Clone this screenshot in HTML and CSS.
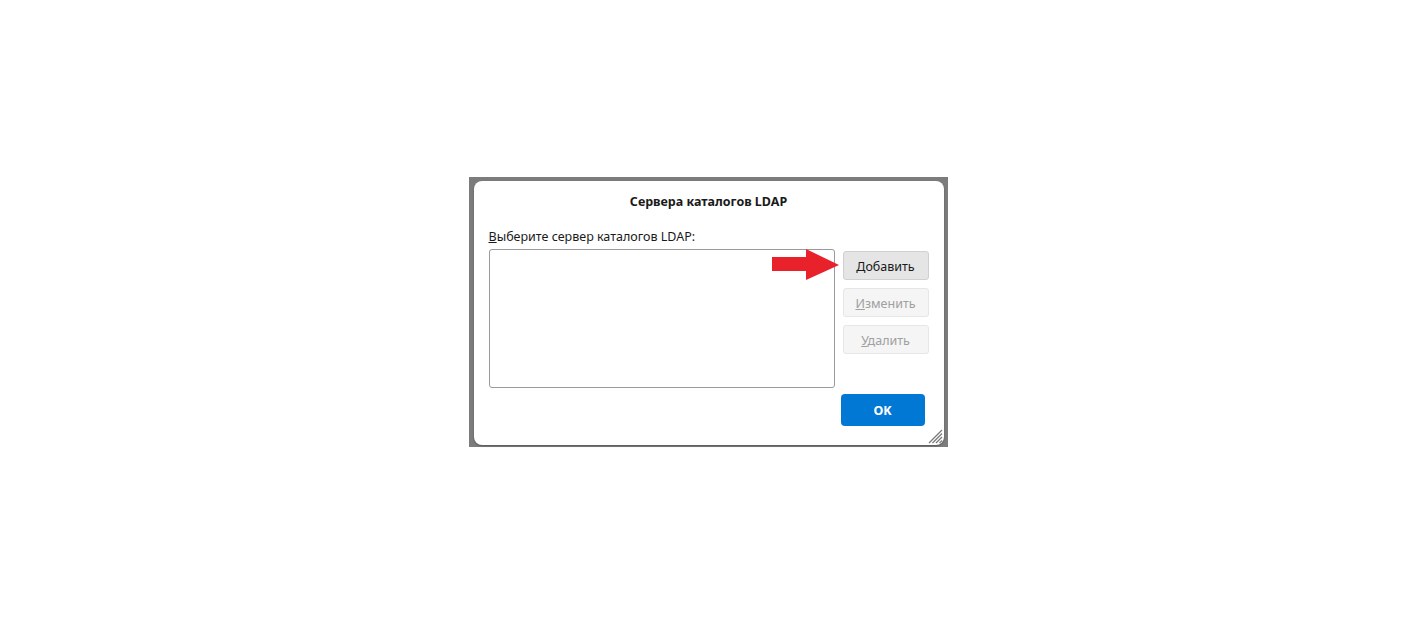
FILE: index.html
```html
<!DOCTYPE html>
<html lang="ru">
<head>
  <meta charset="UTF-8">
  <title>Сервера каталогов LDAP</title>
  <link rel="stylesheet" href="styles.css">
</head>
<body>
  <div class="backdrop">
    <div class="dialog">
      <div class="title">Сервера каталогов LDAP</div>
      <div class="main">
        <div class="list-col">
          <label class="label"><u>В</u>ыберите сервер каталогов LDAP:</label>
          <div class="listbox"></div>
        </div>
        <div class="btn-col">
          <button class="btn">Добавить</button>
          <button class="btn" disabled><u>И</u>зменить</button>
          <button class="btn" disabled><u>У</u>далить</button>
        </div>
      </div>
      <div class="footer">
        <button class="ok">OK</button>
      </div>
      <svg class="arrow" width="68" height="32" viewBox="0 0 68 32">
        <polygon points="0,8 34,8 34,0 67,16 34,31 34,22 0,22" fill="#e8212b"/>
      </svg>
      <svg class="grip" width="16" height="16" viewBox="0 0 16 16">
        <g stroke="#7a7a7a" stroke-width="1.3">
          <line x1="15" y1="2" x2="2" y2="15"/>
          <line x1="15" y1="5.5" x2="5.5" y2="15"/>
          <line x1="15" y1="9" x2="9" y2="15"/>
          <line x1="15" y1="12.5" x2="12.5" y2="15"/>
        </g>
      </svg>
    </div>
  </div>
</body>
</html>
```

FILE: styles.css
```css
body {
  margin: 0;
  background: #ffffff;
  font-family: "Noto Sans", "Open Sans", sans-serif;
  height: 100vh;
  display: flex;
  justify-content: center;
  align-items: center;
}
.backdrop {
  background: #7c7c7c;
  width: 479px;
  height: 270px;
  padding: 4px 4px 2px 5px;
  box-sizing: border-box;
}
.dialog {
  position: relative;
  background: #ffffff;
  border-radius: 8px;
  height: 264px;
  padding: 0 15px;
  box-sizing: border-box;
  box-shadow: 0 1px 2px rgba(0,0,0,0.3);
}
.title {
  padding-top: 12px;
  line-height: 18px;
  text-align: center;
  font-size: 12.5px;
  font-weight: bold;
  color: #1a1a1a;
}
.main {
  display: flex;
  gap: 8px;
  margin-top: 18px;
}
.list-col {
  display: flex;
  flex-direction: column;
}
.label {
  font-size: 12.5px;
  line-height: 16px;
  color: #1a1a1a;
}
.listbox {
  margin-top: 4px;
  width: 346px;
  height: 139px;
  border: 1px solid #9a9a9a;
  border-radius: 3px;
  box-sizing: border-box;
}
.btn-col {
  display: flex;
  flex-direction: column;
  gap: 8px;
  margin-top: 22px;
}
.btn {
  width: 86px;
  height: 29px;
  font-family: inherit;
  font-size: 12.5px;
  color: #1a1a1a;
  background: #e5e5e5;
  border: 1px solid #d0d0d0;
  border-radius: 3px;
  padding: 1px 0 0;
}
.btn:disabled {
  background: #f5f5f5;
  border-color: #e6e6e6;
  color: #a0a0a0;
}
.footer {
  display: flex;
  justify-content: flex-end;
  margin-top: 6px;
  padding-right: 4px;
}
.ok {
  width: 84px;
  height: 32px;
  background: #0078d4;
  color: #ffffff;
  border: none;
  border-radius: 4px;
  font-family: inherit;
  font-size: 12.5px;
  font-weight: bold;
}
.arrow {
  position: absolute;
  left: 298px;
  top: 68px;
}
.grip {
  position: absolute;
  right: 1px;
  bottom: 1px;
}
```
